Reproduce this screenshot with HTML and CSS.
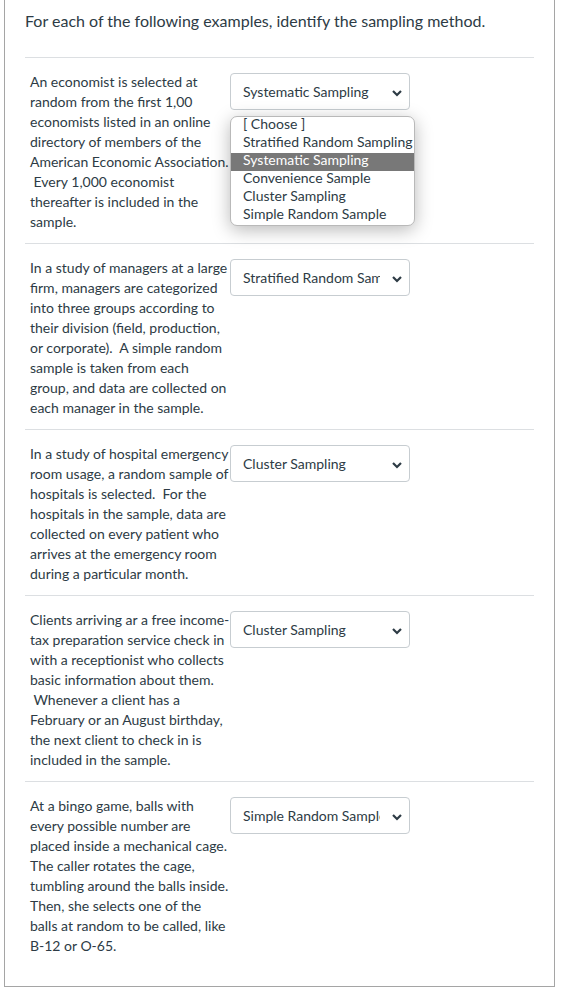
FILE: index.html
```html
<!DOCTYPE html>
<html lang="en">
<head>
<meta charset="utf-8">
<title>Sampling methods</title>
<link rel="stylesheet" href="styles.css">
</head>
<body>
<div class="question">
  <div class="prompt">For each of the following examples, identify the sampling method.</div>
  <div class="answers">
    <div class="row">
      <div class="desc">An economist is selected at random from the first 1,00 economists listed in an online directory of members of the American Economic Association. &nbsp;Every 1,000 economist thereafter is included in the sample.</div>
      <div class="select-wrap">
        <div class="select"><span class="value">Systematic Sampling</span><svg class="chev" width="12" height="8" viewBox="0 0 12 8"><path d="M2 2 L6 6 L10 2" fill="none" stroke="#2d3b45" stroke-width="2.2"/></svg></div>
        <ul class="listbox">
          <li>[ Choose ]</li>
          <li>Stratified Random Sampling</li>
          <li class="selected">Systematic Sampling</li>
          <li>Convenience Sample</li>
          <li>Cluster Sampling</li>
          <li>Simple Random Sample</li>
        </ul>
      </div>
    </div>
    <div class="row">
      <div class="desc">In a study of managers at a large firm, managers are categorized into three groups according to their division (field, production, or corporate).&nbsp; A simple random sample is taken from each group, and data are collected on each manager in the sample.</div>
      <div class="select-wrap">
        <div class="select"><span class="value">Stratified Random Sampling</span><svg class="chev" width="12" height="8" viewBox="0 0 12 8"><path d="M2 2 L6 6 L10 2" fill="none" stroke="#2d3b45" stroke-width="2.2"/></svg></div>
      </div>
    </div>
    <div class="row">
      <div class="desc">In a study of hospital emergency room usage, a random sample of hospitals is selected.&nbsp; For the hospitals in the sample, data are collected on every patient who arrives at the emergency room during a particular month.</div>
      <div class="select-wrap">
        <div class="select"><span class="value">Cluster Sampling</span><svg class="chev" width="12" height="8" viewBox="0 0 12 8"><path d="M2 2 L6 6 L10 2" fill="none" stroke="#2d3b45" stroke-width="2.2"/></svg></div>
      </div>
    </div>
    <div class="row">
      <div class="desc">Clients arriving ar a free income-tax preparation service check in with a receptionist who collects basic information about them. &nbsp;Whenever a client has a February or an August birthday, the next client to check in is included in the sample.</div>
      <div class="select-wrap">
        <div class="select"><span class="value">Cluster Sampling</span><svg class="chev" width="12" height="8" viewBox="0 0 12 8"><path d="M2 2 L6 6 L10 2" fill="none" stroke="#2d3b45" stroke-width="2.2"/></svg></div>
      </div>
    </div>
    <div class="row last">
      <div class="desc">At a bingo game, balls with every possible number are placed inside a mechanical cage. The caller rotates the cage, tumbling around the balls inside. Then, she selects one of the balls at random to be called, like B-12 or O-65.</div>
      <div class="select-wrap">
        <div class="select"><span class="value">Simple Random Sample</span><svg class="chev" width="12" height="8" viewBox="0 0 12 8"><path d="M2 2 L6 6 L10 2" fill="none" stroke="#2d3b45" stroke-width="2.2"/></svg></div>
      </div>
    </div>
  </div>
</div>
</body>
</html>
```
FILE: styles.css
```css
html, body {
  margin: 0;
  padding: 0;
  background: #ffffff;
}
body {
  font-family: Lato, "Liberation Sans", sans-serif;
  color: #2d3b45;
}
.question {
  margin: 0 10px 4px 4px;
  border: 1px solid #a5a5a5;
  border-top: none;
  padding: 10px 20px 19px 20px;
}
.prompt {
  font-size: 16px;
  line-height: 22px;
  padding-bottom: 25px;
  border-bottom: 1px solid #dcdfe2;
}
.row {
  display: flex;
  align-items: flex-start;
  padding: 14px 0 11px 5px;
  border-bottom: 1px solid #dcdfe2;
}
.row.last {
  border-bottom: none;
}
.desc {
  width: 200px;
  flex: none;
  font-size: 14px;
  line-height: 20px;
}
.select-wrap {
  position: relative;
  margin-top: 1px;
}
.select {
  position: relative;
  box-sizing: border-box;
  width: 180px;
  height: 37px;
  border: 1px solid #c7cdd1;
  border-radius: 4px;
  background: #fff;
  display: flex;
  align-items: center;
  padding: 0 0 1px 12px;
  font-size: 14px;
}
.value {
  width: 137px;
  overflow: hidden;
  white-space: nowrap;
  flex: none;
}
.chev {
  position: absolute;
  right: 6px;
  top: 15px;
}
.listbox {
  position: absolute;
  left: 0;
  top: 43px;
  width: 185px;
  box-sizing: border-box;
  margin: 0;
  padding: 0;
  list-style: none;
  background: #fff;
  border: 1px solid #b9b9b9;
  border-radius: 7px;
  box-shadow: 0 4px 18px rgba(0, 0, 0, 0.28);
  overflow: hidden;
  font-size: 14px;
  z-index: 2;
}
.listbox li {
  height: 18px;
  line-height: 14px;
  padding-left: 12px;
  white-space: nowrap;
}
.listbox li.selected {
  background: #787878;
  color: #fff;
}
```
